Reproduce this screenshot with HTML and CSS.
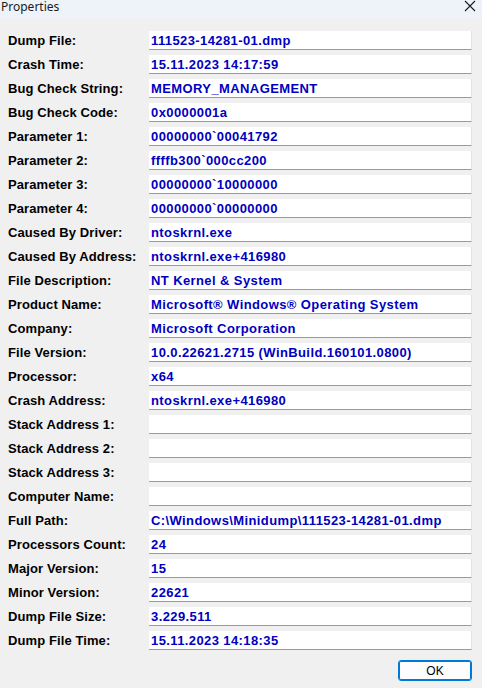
FILE: index.html
```html
<!DOCTYPE html>
<html>
<head>
<meta charset="utf-8">
<link rel="stylesheet" href="styles.css">
</head>
<body>
<div class="titlebar">
  <span class="title">Properties</span>
  <svg class="close" width="12" height="12" viewBox="0 0 12 12"><path d="M1 1 L11 11 M11 1 L1 11" stroke="#1a1a1a" stroke-width="1.1" fill="none"/></svg>
</div>
<div class="content">
  <div class="row"><span class="label">Dump File:</span><span class="field">111523-14281-01.dmp</span></div>
  <div class="row"><span class="label">Crash Time:</span><span class="field">15.11.2023 14:17:59</span></div>
  <div class="row"><span class="label">Bug Check String:</span><span class="field">MEMORY_MANAGEMENT</span></div>
  <div class="row"><span class="label">Bug Check Code:</span><span class="field">0x0000001a</span></div>
  <div class="row"><span class="label">Parameter 1:</span><span class="field">00000000`00041792</span></div>
  <div class="row"><span class="label">Parameter 2:</span><span class="field">ffffb300`000cc200</span></div>
  <div class="row"><span class="label">Parameter 3:</span><span class="field">00000000`10000000</span></div>
  <div class="row"><span class="label">Parameter 4:</span><span class="field">00000000`00000000</span></div>
  <div class="row"><span class="label">Caused By Driver:</span><span class="field">ntoskrnl.exe</span></div>
  <div class="row"><span class="label">Caused By Address:</span><span class="field">ntoskrnl.exe+416980</span></div>
  <div class="row"><span class="label">File Description:</span><span class="field">NT Kernel &amp; System</span></div>
  <div class="row"><span class="label">Product Name:</span><span class="field">Microsoft® Windows® Operating System</span></div>
  <div class="row"><span class="label">Company:</span><span class="field">Microsoft Corporation</span></div>
  <div class="row"><span class="label">File Version:</span><span class="field">10.0.22621.2715 (WinBuild.160101.0800)</span></div>
  <div class="row"><span class="label">Processor:</span><span class="field">x64</span></div>
  <div class="row"><span class="label">Crash Address:</span><span class="field">ntoskrnl.exe+416980</span></div>
  <div class="row"><span class="label">Stack Address 1:</span><span class="field"></span></div>
  <div class="row"><span class="label">Stack Address 2:</span><span class="field"></span></div>
  <div class="row"><span class="label">Stack Address 3:</span><span class="field"></span></div>
  <div class="row"><span class="label">Computer Name:</span><span class="field"></span></div>
  <div class="row"><span class="label">Full Path:</span><span class="field">C:\Windows\Minidump\111523-14281-01.dmp</span></div>
  <div class="row"><span class="label">Processors Count:</span><span class="field">24</span></div>
  <div class="row"><span class="label">Major Version:</span><span class="field">15</span></div>
  <div class="row"><span class="label">Minor Version:</span><span class="field">22621</span></div>
  <div class="row"><span class="label">Dump File Size:</span><span class="field">3.229.511</span></div>
  <div class="row"><span class="label">Dump File Time:</span><span class="field">15.11.2023 14:18:35</span></div>
  <div class="buttons"><button class="ok">OK</button></div>
</div>
</body>
</html>
```

FILE: styles.css
```css
html, body {
  margin: 0;
  padding: 0;
  background: #f0f0f0;
}
body {
  width: 482px;
  height: 688px;
  overflow: hidden;
}
.titlebar {
  height: 18px;
  background: #eef3fa;
  display: flex;
  align-items: flex-start;
  justify-content: space-between;
  padding: 0 6px 0 1px;
  box-sizing: border-box;
}
.title {
  font-family: "Noto Sans", "Open Sans", sans-serif;
  font-size: 12px;
  color: #1a1a1a;
  line-height: 14px;
}
.close {
  margin-top: 0;
}
.content {
  padding: 12px 10px 0 8px;
  display: flex;
  flex-direction: column;
  gap: 4px;
}
.row {
  display: flex;
  align-items: center;
  height: 20px;
}
.label {
  width: 141px;
  font-family: "Liberation Sans", Arial, sans-serif;
  font-weight: bold;
  font-size: 13px;
  letter-spacing: 0.1px;
  color: #000;
}
.field {
  flex: 1;
  height: 19px;
  box-sizing: border-box;
  background: #fff;
  border-bottom: 1px solid #9a9a9a;
  border-right: 1px solid #e3e3e3;
  padding-left: 2px;
  font-family: "Liberation Sans", Arial, sans-serif;
  font-weight: bold;
  font-size: 13px;
  letter-spacing: 0.4px;
  line-height: 19px;
  color: #0000c0;
  white-space: nowrap;
  overflow: hidden;
}
.buttons {
  display: flex;
  justify-content: flex-end;
  margin-top: 6px;
}
.ok {
  width: 74px;
  height: 21px;
  box-sizing: border-box;
  border: 1px solid #0078d4;
  border-radius: 3px;
  background: #fdfdfd;
  box-shadow: inset 0 0 0 1px #0078d4;
  font-family: "Liberation Sans", Arial, sans-serif;
  font-size: 12px;
  color: #000;
  padding: 0;
}
```
